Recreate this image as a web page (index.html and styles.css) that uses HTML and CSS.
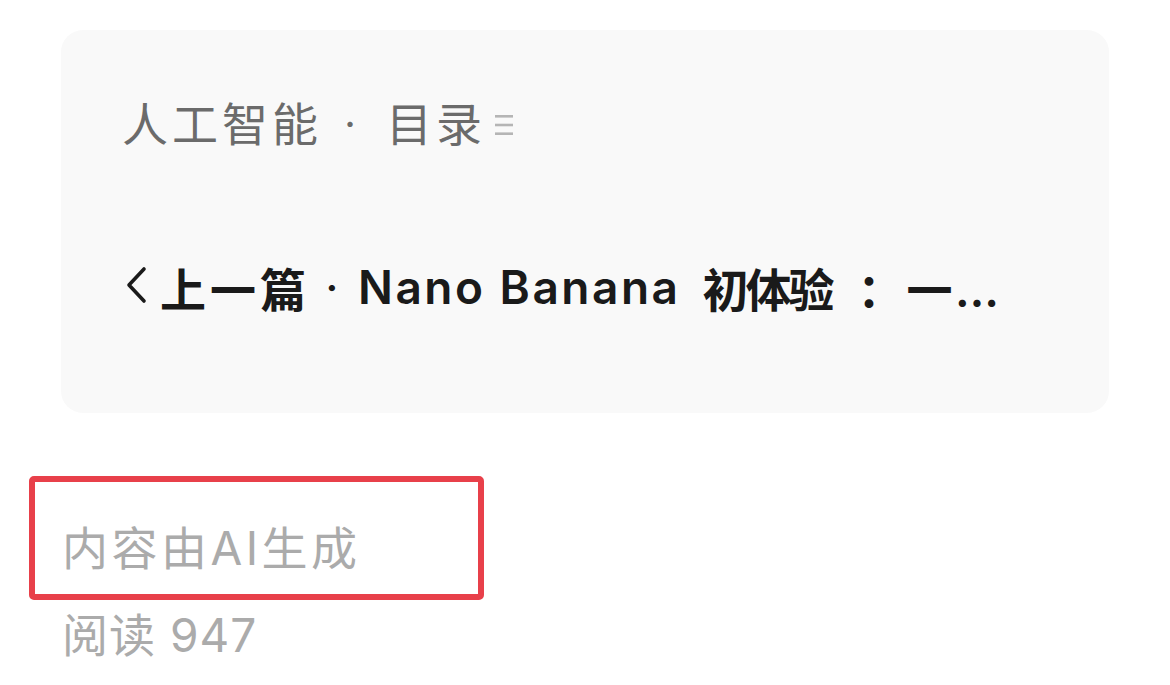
FILE: index.html
```html
<!DOCTYPE html>
<html lang="zh-CN">
<head>
<meta charset="utf-8">
<link rel="stylesheet" href="styles.css">
</head>
<body>
<div class="page">
  <div class="card">
    <div class="crumb">
      <span class="crumb-text">人工智能</span>
      <span class="crumb-dot">·</span>
      <span class="crumb-text">目录</span>
      <svg class="menu-icon" width="18" height="24" viewBox="0 0 18 24"><rect x="0" y="2" width="18" height="2.6" fill="#b5b5b5"/><rect x="0" y="10.7" width="18" height="2.6" fill="#b5b5b5"/><rect x="0" y="19.4" width="18" height="2.6" fill="#b5b5b5"/></svg>
    </div>
    <div class="prev">
      <svg class="chev" width="26" height="40" viewBox="0 0 26 40"><path d="M22 4 L7 20 L22 36" fill="none" stroke="#1a1a1a" stroke-width="3.6" stroke-linecap="round" stroke-linejoin="round"/></svg>
      <span class="prev-lead">上一篇</span>
      <span class="prev-dot">·</span>
      <span class="prev-latin">Nano Banana</span>
      <span class="prev-cjk">初体验</span><span class="prev-colon">：</span><span class="prev-tail">一…</span>
    </div>
  </div>
  <div class="meta">
    <div class="ai-box"><span class="ai-text">内容由AI生成</span></div>
    <div class="reads">阅读 947</div>
  </div>
</div>
</body>
</html>
```
FILE: styles.css
```css
html, body {
  margin: 0;
  padding: 0;
  background: #ffffff;
}
body {
  font-family: Inter, "Noto Sans CJK SC", sans-serif;
  width: 1170px;
  height: 685px;
  overflow: hidden;
}
.page {
  padding-top: 30px;
}
.card {
  margin-left: 61px;
  width: 1048px;
  height: 383px;
  box-sizing: border-box;
  background: #f9f9f9;
  border-radius: 22px;
  padding: 66px 0 0 61px;
}
.crumb {
  display: flex;
  align-items: center;
  height: 56px;
  color: #6b6b6b;
  font-size: 46px;
  line-height: 56px;
}
.crumb-text {
  letter-spacing: 4px;
}
.crumb-dot {
  display: inline-block;
  width: 56px;
  margin-right: 8px;
  text-align: center;
  font-size: 40px;
}
.menu-icon {
  margin-left: 9px;
  margin-top: 2px;
}
.prev {
  display: flex;
  align-items: center;
  margin-top: 107px;
  height: 56px;
  color: #1a1a1a;
  font-weight: 600;
  font-size: 46px;
  white-space: nowrap;
}
.chev {
  margin-right: 12px;
  margin-top: -4px;
}
.prev-lead {
  letter-spacing: 4px;
}
.prev-dot {
  display: inline-block;
  width: 52px;
  margin-left: -4px;
  text-align: center;
  font-size: 40px;
}
.prev-latin {
  letter-spacing: 2.5px;
  margin-right: 22px;
}
.prev-cjk {
  letter-spacing: -3px;
}
.prev-colon {
  margin-left: 26px;
  margin-right: 6px;
  letter-spacing: -3px;
}
.prev-tail {
  letter-spacing: 2.5px;
}
.meta {
  padding-left: 29px;
  margin-top: 63px;
}
.ai-box {
  display: inline-flex;
  align-items: center;
  box-sizing: border-box;
  width: 455px;
  height: 124px;
  border: 6px solid #e8404a;
  border-radius: 5px;
  padding-left: 27px;
  padding-top: 14px;
}
.ai-text {
  font-size: 46px;
  color: #ababab;
  letter-spacing: 3.5px;
}
.reads {
  margin-left: 33px;
  margin-top: 7px;
  font-size: 46px;
  line-height: 56px;
  color: #ababab;
  letter-spacing: 1px;
}
```
